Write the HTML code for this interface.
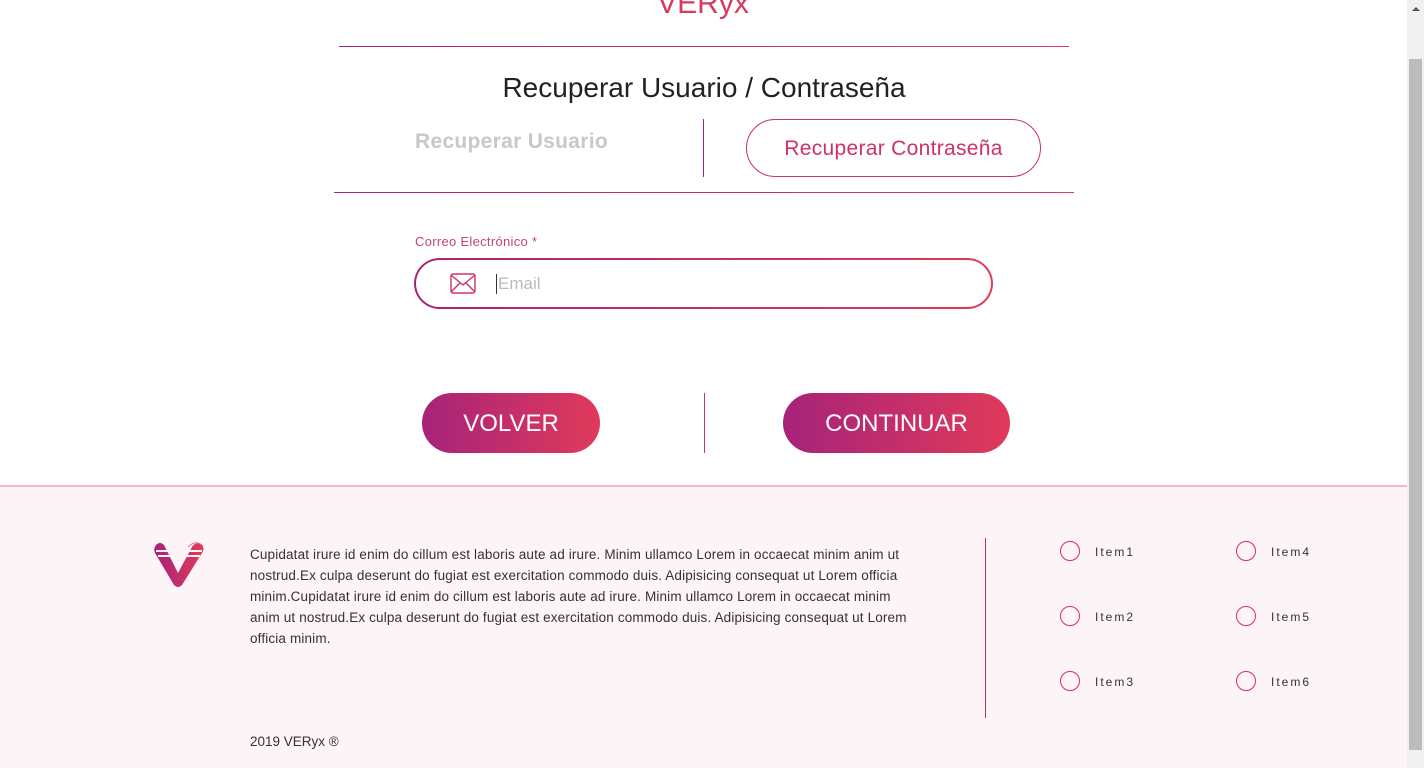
<!DOCTYPE html>
<html><head><meta charset="utf-8"><style>
*{margin:0;padding:0;box-sizing:border-box}
body{width:1424px;height:768px;overflow:hidden;background:#fff;font-family:"Liberation Sans",sans-serif;position:relative}
.a{position:absolute}
.grad{background:linear-gradient(90deg,#a6237a,#e03a5a)}
</style></head><body>
<div class="a" style="left:603px;top:-13px;width:200px;text-align:center;font-size:30px;color:#d83a5e">VERyx</div>
<div class="a grad" style="left:339px;top:46px;width:730px;height:1px"></div>
<div class="a" style="left:339px;top:72px;width:730px;text-align:center;font-size:28px;color:#222">Recuperar Usuario / Contraseña</div>
<div class="a" style="left:415px;top:130px;font-size:21px;color:#c8c8c8;font-weight:bold;letter-spacing:0.3px">Recuperar Usuario</div>
<div class="a" style="left:703px;top:119px;width:1px;height:58px;background:#a6237a"></div>
<div class="a" style="left:746px;top:119px;width:295px;height:58px;border:1px solid #d0306a;border-radius:29px;text-align:center;line-height:58px;font-size:21px;color:#d0306a;letter-spacing:0.3px">Recuperar Contraseña</div>
<div class="a grad" style="left:334px;top:192px;width:740px;height:1px"></div>
<div class="a" style="left:415px;top:234px;font-size:13px;color:#c8407a;letter-spacing:0.3px">Correo Electrónico *</div>
<div class="a grad" style="left:414px;top:258px;width:579px;height:51px;border-radius:26px;padding:2px">
<div style="width:100%;height:100%;background:#fff;border-radius:24px;position:relative">
<svg class="a" style="left:34px;top:13px" width="26" height="21" viewBox="0 0 26 21"><rect x="1" y="1" width="24" height="19" rx="2" fill="none" stroke="#d0306a" stroke-width="1.4"/><path d="M1 2 L13 12 L25 2 M1 19 L10 10 M25 19 L16 10" fill="none" stroke="#d0306a" stroke-width="1.4"/></svg>
<div class="a" style="left:80px;top:14px;width:1px;height:20px;background:#333"></div>
<div class="a" style="left:82px;top:14px;font-size:17px;color:#bbb">Email</div>
</div></div>
<div class="a grad" style="left:422px;top:393px;width:178px;height:60px;border-radius:30px;color:#fff;font-size:24px;text-align:center;line-height:62px">VOLVER</div>
<div class="a" style="left:704px;top:393px;width:1px;height:60px;background:#d0306a"></div>
<div class="a grad" style="left:783px;top:393px;width:227px;height:60px;border-radius:30px;color:#fff;font-size:24px;text-align:center;line-height:62px">CONTINUAR</div>
<div class="a" style="left:0;top:485px;width:1407px;height:283px;background:#fdf4f7;border-top:2px solid #f2b8c8"></div>
<svg class="a" style="left:152px;top:541px" width="54" height="48" viewBox="0 0 54 48">
<defs><linearGradient id="g" x1="0" x2="1"><stop offset="0" stop-color="#a6237a"/><stop offset="1" stop-color="#e03a5a"/></linearGradient></defs>
<path d="M4 4 Q8 0 12 4 L26 32 L40 6 Q44 0 50 4 Q53 8 50 12 L30 44 Q26 48 22 44 L3 12 Q1 8 4 4Z" fill="url(#g)"/>
<path d="M4 10 H24 M6 15 H26 M30 10 H50 M28 15 H48" stroke="#fdf4f7" stroke-width="2"/>
<path d="M36 6 Q44 -2 51 5" stroke="#e07090" fill="none"/>
</svg>
<div class="a" style="left:250px;top:544px;width:672px;font-size:13.5px;line-height:21px;color:#333;letter-spacing:0.15px">Cupidatat irure id enim do cillum est laboris aute ad irure. Minim ullamco Lorem in occaecat minim anim ut nostrud.Ex culpa deserunt do fugiat est exercitation commodo duis. Adipisicing consequat ut Lorem officia minim.Cupidatat irure id enim do cillum est laboris aute ad irure. Minim ullamco Lorem in occaecat minim anim ut nostrud.Ex culpa deserunt do fugiat est exercitation commodo duis. Adipisicing consequat ut Lorem officia minim.</div>
<div class="a" style="left:985px;top:538px;width:1px;height:180px;background:#b0306a"></div>
<div class="a" style="left:250px;top:734px;font-size:13.5px;color:#333">2019 VERyx ®</div>
<div class="a" style="left:1060px;top:541px;width:20px;height:20px;border:1.5px solid #d0306a;border-radius:50%"></div>
<div class="a" style="left:1095px;top:545px;font-size:12px;letter-spacing:2px;color:#333">Item1</div>
<div class="a" style="left:1060px;top:606px;width:20px;height:20px;border:1.5px solid #d0306a;border-radius:50%"></div>
<div class="a" style="left:1095px;top:610px;font-size:12px;letter-spacing:2px;color:#333">Item2</div>
<div class="a" style="left:1060px;top:671px;width:20px;height:20px;border:1.5px solid #d0306a;border-radius:50%"></div>
<div class="a" style="left:1095px;top:675px;font-size:12px;letter-spacing:2px;color:#333">Item3</div>
<div class="a" style="left:1236px;top:541px;width:20px;height:20px;border:1.5px solid #d0306a;border-radius:50%"></div>
<div class="a" style="left:1271px;top:545px;font-size:12px;letter-spacing:2px;color:#333">Item4</div>
<div class="a" style="left:1236px;top:606px;width:20px;height:20px;border:1.5px solid #d0306a;border-radius:50%"></div>
<div class="a" style="left:1271px;top:610px;font-size:12px;letter-spacing:2px;color:#333">Item5</div>
<div class="a" style="left:1236px;top:671px;width:20px;height:20px;border:1.5px solid #d0306a;border-radius:50%"></div>
<div class="a" style="left:1271px;top:675px;font-size:12px;letter-spacing:2px;color:#333">Item6</div>
<div class="a" style="left:1407px;top:0;width:17px;height:768px;background:#f0f0f0"></div>
<div class="a" style="left:1412px;top:7px;width:0;height:0;border-left:4px solid transparent;border-right:4px solid transparent;border-bottom:4px solid #555"></div>
<div class="a" style="left:1409px;top:59px;width:13px;height:691px;background:#bcbcbc"></div>
</body></html>
